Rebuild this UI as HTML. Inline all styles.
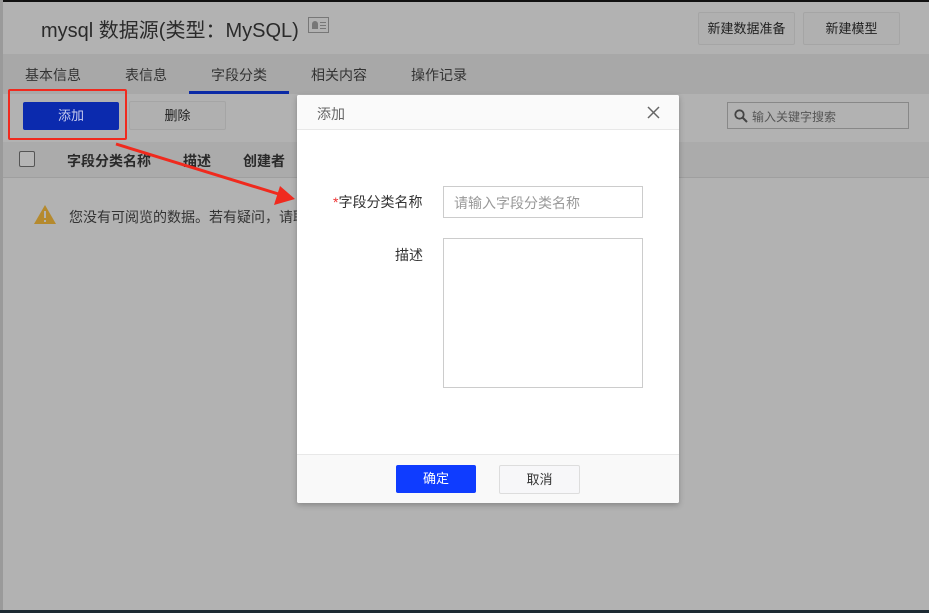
<!DOCTYPE html>
<html><head><meta charset="utf-8"><style>
*{box-sizing:border-box;margin:0;padding:0}
body{width:929px;height:613px;overflow:hidden;background:#b2b2b2;font-family:"Liberation Sans","Noto Sans CJK SC",sans-serif;position:relative;color:#222}
.a{position:absolute}
.btn{position:absolute;border:1px solid #a5a5a5;border-radius:2px;background:#b0b0b0;font-size:13px;text-align:center;color:#222}
</style></head><body>
<div class="a" style="left:0;top:0;width:929px;height:2px;background:#111"></div>
<div class="a" style="left:0;top:0;width:3px;height:613px;background:#9a9a9a"></div>
<div class="a" style="left:0;top:610px;width:929px;height:3px;background:#1d2a33"></div>
<div class="a" style="left:41px;top:14px;font-size:20px;color:#2a2a2a">mysql 数据源(类型：MySQL)</div>
<div class="a" style="left:308px;top:17px;width:21px;height:16px;border:1px solid #777"><div class="a" style="left:3px;top:3px;width:6px;height:8px;background:#777;border-radius:3px 3px 0 0"></div><div class="a" style="left:11px;top:4px;width:6px;height:1px;background:#777;box-shadow:0 3px 0 #777,0 6px 0 #777"></div></div>
<div class="btn" style="left:698px;top:12px;width:97px;height:33px;line-height:31px">新建数据准备</div>
<div class="btn" style="left:803px;top:12px;width:97px;height:33px;line-height:31px">新建模型</div>
<div class="a" style="left:3px;top:54px;width:926px;height:40px;background:#a8a8a8"></div>
<div class="a" style="left:25px;top:65px;font-size:14px;color:#333">基本信息</div>
<div class="a" style="left:125px;top:65px;font-size:14px;color:#333">表信息</div>
<div class="a" style="left:211px;top:65px;font-size:14px;color:#333">字段分类</div>
<div class="a" style="left:189px;top:91px;width:100px;height:3px;background:#0b2aa6"></div>
<div class="a" style="left:311px;top:65px;font-size:14px;color:#333">相关内容</div>
<div class="a" style="left:411px;top:65px;font-size:14px;color:#333">操作记录</div>
<div class="a" style="left:23px;top:102px;width:96px;height:28px;background:#0b2aae;border-radius:2px;color:#c8ccee;font-size:13px;text-align:center;line-height:28px">添加</div>
<div class="a" style="left:8px;top:89px;width:119px;height:51px;border:2px solid #f02a1e;border-radius:2px"></div>
<div class="btn" style="left:129px;top:101px;width:97px;height:29px;line-height:27px">删除</div>
<div class="a" style="left:727px;top:102px;width:182px;height:27px;border:1px solid #888"><svg class="a" style="left:6px;top:6px" width="14" height="14"><circle cx="5.5" cy="5.5" r="4.2" fill="none" stroke="#444" stroke-width="1.8"/><path d="M8.5 8.5L13 13" stroke="#444" stroke-width="2"/></svg><span class="a" style="left:24px;top:5px;font-size:12px;color:#555">输入关键字搜索</span></div>
<div class="a" style="left:3px;top:142px;width:926px;height:36px;background:#ababab;border-bottom:1px solid #9f9f9f"></div>
<div class="a" style="left:19px;top:151px;width:16px;height:16px;border:1px solid #555;border-radius:2px;background:#b5b5b5"></div>
<div class="a" style="left:67px;top:151px;font-size:14px;font-weight:bold;color:#2a2a2a">字段分类名称</div>
<div class="a" style="left:183px;top:151px;font-size:14px;font-weight:bold;color:#2a2a2a">描述</div>
<div class="a" style="left:243px;top:151px;font-size:14px;font-weight:bold;color:#2a2a2a">创建者</div>
<svg class="a" style="left:33px;top:204px" width="24" height="21"><path d="M12 1L23 20H1Z" fill="#b58a2e"/><rect x="11" y="7" width="2" height="7" fill="#b2b2b2"/><rect x="11" y="16" width="2" height="2" fill="#b2b2b2"/></svg>
<div class="a" style="left:69px;top:207px;font-size:14px;color:#333">您没有可阅览的数据。若有疑问，请联系</div>
<svg class="a" style="left:0;top:0" width="929" height="613"><path d="M116 144L285 196" stroke="#f02a1e" stroke-width="3"/><path d="M295 199L274 205L280 186Z" fill="#f02a1e"/></svg>
<div class="a" style="left:297px;top:95px;width:382px;height:408px;background:#fff;border-radius:2px;box-shadow:0 2px 6px rgba(0,0,0,.25);overflow:hidden">
<div class="a" style="left:0;top:0;width:382px;height:35px;background:#fafafa;border-bottom:1px solid #e8e8e8"></div>
<div class="a" style="left:20px;top:9px;font-size:14px;color:#666">添加</div>
<svg class="a" style="left:350px;top:11px" width="13" height="13"><path d="M1 1L12 12M12 1L1 12" stroke="#666" stroke-width="1.5"/></svg>
<div class="a" style="left:36px;top:97px;font-size:14px;color:#333"><span style="color:#e33">*</span>字段分类名称</div>
<div class="a" style="left:146px;top:91px;width:200px;height:32px;border:1px solid #ccc"><span class="a" style="left:10px;top:6px;font-size:14px;color:#999">请输入字段分类名称</span></div>
<div class="a" style="left:98px;top:150px;font-size:14px;color:#333">描述</div>
<div class="a" style="left:146px;top:143px;width:200px;height:150px;border:1px solid #ccc"></div>
<div class="a" style="left:0;top:359px;width:382px;height:49px;background:#f9f9f9;border-top:1px solid #e8e8e8"></div>
<div class="a" style="left:99px;top:370px;width:80px;height:28px;background:#0f3cff;border-radius:2px;color:#fff;font-size:13px;text-align:center;line-height:28px">确定</div>
<div class="a" style="left:202px;top:370px;width:81px;height:29px;background:#f7f7f9;border:1px solid #ddd;border-radius:2px;color:#333;font-size:13px;text-align:center;line-height:27px">取消</div>
</div>
</body></html>
